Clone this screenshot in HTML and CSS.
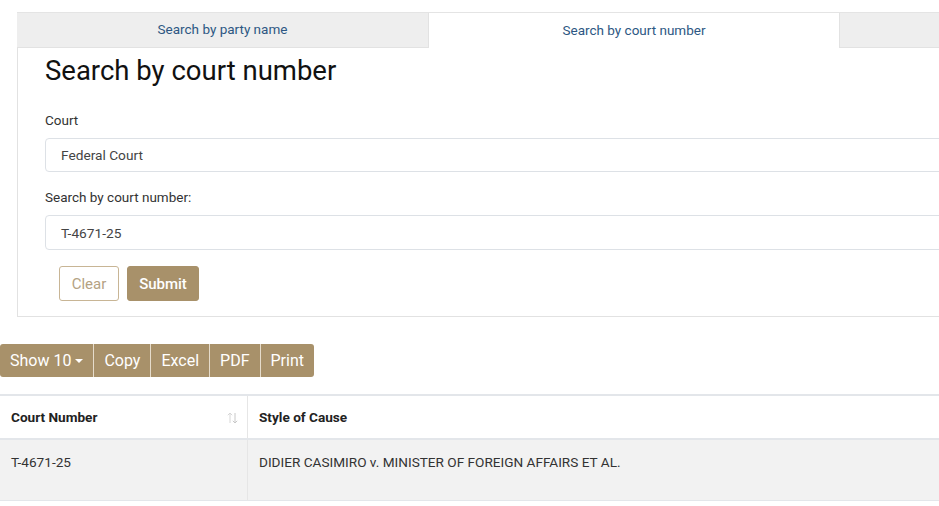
FILE: index.html
```html
<!DOCTYPE html>
<html lang="en">
<head>
    <meta charset="UTF-8">
    <meta name="viewport" content="width=device-width, initial-scale=1.0">
    <title>Search by court number</title>
    <link rel="stylesheet" href="styles.css">
</head>
<body>
    <div class="page">
        <!-- Search tabs -->
        <div class="search-box">
            <div class="tabs">
                <a href="#" class="tab">Search by party name</a>
                <a href="#" class="tab active">Search by court number</a>
                <span class="tab tab-rest"></span>
            </div>

            <div class="tab-panel">
                <h1>Search by court number</h1>

                <label class="field-label" for="court">Court</label>
                <div class="field">Federal Court</div>

                <label class="field-label" for="number">Search by court number:</label>
                <div class="field field-input">T-4671-25</div>

                <div class="actions">
                    <button class="btn btn-outline">Clear</button>
                    <button class="btn btn-solid">Submit</button>
                </div>
            </div>
        </div>

        <!-- Results toolbar -->
        <div class="btn-group">
            <button class="btn-tool">Show 10 <span class="caret"></span></button>
            <button class="btn-tool">Copy</button>
            <button class="btn-tool">Excel</button>
            <button class="btn-tool">PDF</button>
            <button class="btn-tool">Print</button>
        </div>

        <table class="results">
            <thead>
                <tr>
                    <th class="col-number">
                        Court Number
                        <svg class="sort-icon" width="11" height="12" viewBox="0 0 11 12">
                            <path d="M3 11V1M0.8 3.2L3 1l2.2 2.2" fill="none" stroke="#d6d6d6" stroke-width="1"/>
                            <path d="M8 1v10M5.8 8.8L8 11l2.2-2.2" fill="none" stroke="#c8c8c8" stroke-width="1"/>
                        </svg>
                    </th>
                    <th>Style of Cause</th>
                </tr>
            </thead>
            <tbody>
                <tr>
                    <td>T-4671-25</td>
                    <td>DIDIER CASIMIRO v. MINISTER OF FOREIGN AFFAIRS ET AL.</td>
                </tr>
            </tbody>
        </table>
    </div>
</body>
</html>
```

FILE: styles.css
```css
html, body {
    margin: 0;
    padding: 0;
    background-color: #fff;
    overflow: hidden;
}

body {
    font-family: Roboto, "Liberation Sans", Arial, sans-serif;
    color: #222;
}

.page {
    width: 1000px;
    padding-top: 12px;
}

/* Tabs */
.search-box {
    margin-left: 17px;
}

.tabs {
    display: flex;
    height: 35px;
    border-top: 1px solid #e4e4e4;
}

.tab {
    width: 411px;
    display: flex;
    align-items: center;
    justify-content: center;
    background-color: #eeeeee;
    color: #2d5783;
    font-size: 13.5px;
    text-decoration: none;
    border-bottom: 1px solid #e2e2e2;
    box-sizing: border-box;
    padding-bottom: 2px;
}

.tab.active {
    width: 412px;
    background-color: #fff;
    border-bottom: none;
    border-left: 1px solid #e2e2e2;
    border-right: 1px solid #e2e2e2;
}

.tab-rest {
    flex: 1;
}

.tab-panel {
    border-left: 1px solid #e2e2e2;
    border-bottom: 1px solid #e2e2e2;
    padding: 7px 0 15px 27px;
}

h1 {
    margin: 0 0 25px 0;
    font-size: 27.5px;
    font-weight: 400;
    color: #111;
    line-height: 32px;
}

.field-label {
    display: block;
    font-size: 13.5px;
    color: #333;
    margin-bottom: 10px;
    line-height: 16px;
}

.field {
    height: 34px;
    box-sizing: border-box;
    border: 1px solid #dde1e6;
    border-radius: 4px;
    padding: 0 15px;
    display: flex;
    align-items: center;
    font-size: 13.7px;
    color: #444;
    margin-bottom: 17px;
}

.field-input {
    height: 35px;
    margin-bottom: 16px;
}

.actions {
    display: flex;
    gap: 8px;
    padding-left: 14px;
}

.btn {
    height: 35px;
    font-family: inherit;
    font-size: 15px;
    border-radius: 3px;
    padding: 0;
    cursor: pointer;
}

.btn-outline {
    width: 60px;
    background-color: #fff;
    color: #b4a283;
    border: 1px solid #c8b595;
}

.btn-solid {
    width: 72px;
    background-color: #a8916a;
    color: #fff;
    border: 1px solid #a8916a;
    font-weight: 500;
}

/* Toolbar */
.btn-group {
    display: flex;
    margin-top: 27px;
    height: 33px;
}

.btn-tool {
    background-color: #a8916a;
    color: #fff;
    border: none;
    border-right: 1px solid #e6dccb;
    font-family: inherit;
    font-size: 16px;
    padding: 0 10px;
    display: flex;
    align-items: center;
    gap: 4px;
    cursor: pointer;
}

.btn-tool:first-child {
    border-radius: 3px 0 0 3px;
}

.btn-tool:last-child {
    border-right: none;
    border-radius: 0 3px 3px 0;
}

.caret {
    display: inline-block;
    width: 0;
    height: 0;
    border-left: 4px solid transparent;
    border-right: 4px solid transparent;
    border-top: 4px solid #fff;
}

/* Results table */
.results {
    width: 100%;
    border-collapse: collapse;
    margin-top: 17px;
    font-size: 13.6px;
}

.results th,
.results td {
    text-align: left;
    padding: 0 11px;
    border-left: 1px solid #e6e6e6;
}

.results th:first-child,
.results td:first-child {
    border-left: none;
}

.results thead tr {
    border-top: 2px solid #e3e6ea;
    border-bottom: 2px solid #e3e6ea;
}

.results th {
    height: 42px;
    font-weight: 700;
    color: #222;
}

.col-number {
    width: 225px;
    position: relative;
}

.sort-icon {
    position: absolute;
    right: 9px;
    top: 16px;
}

.results tbody tr {
    background-color: #f2f2f2;
    border-bottom: 1px solid #e3e6ea;
}

.results td {
    height: 61px;
    vertical-align: top;
    padding-top: 14px;
    box-sizing: border-box;
    color: #333;
}
```
